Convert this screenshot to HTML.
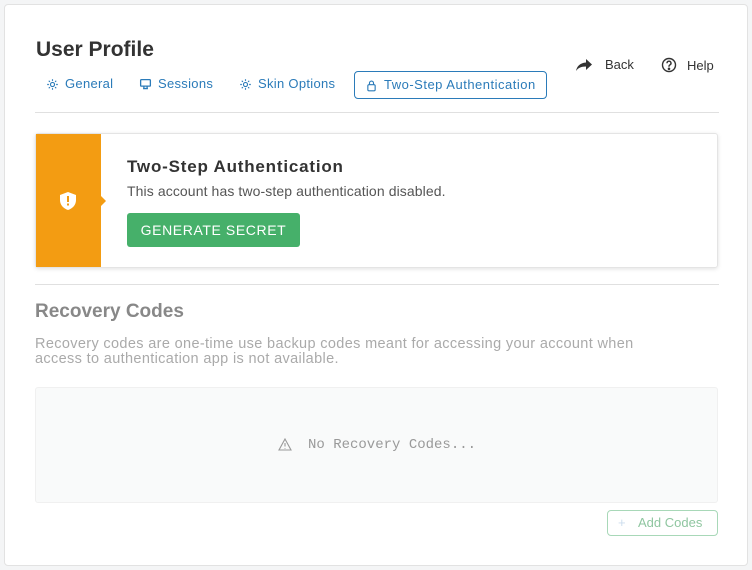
<!DOCTYPE html>
<html><head><meta charset="utf-8"><style>
body{margin:0;width:752px;height:570px;background:#f4f5f6;font-family:"Liberation Sans",sans-serif;position:relative;overflow:hidden}
.card{position:absolute;left:4px;top:4px;width:742px;height:560px;background:#fff;border:1px solid #e2e2e2;border-radius:4px}
.abs{position:absolute}
h1{position:absolute;left:31px;top:33px;margin:0;font-size:21px;font-weight:bold;color:#333}
.tab{position:absolute;top:66px;height:26px;line-height:26px;font-size:13px;color:#2b7bb9;display:flex;align-items:center;gap:6px;letter-spacing:.3px}
.tab svg{width:13px;height:13px}
.active{border:1px solid #2b7bb9;border-radius:4px;padding:0 10px;letter-spacing:.5px}
.hr{position:absolute;left:30px;width:684px;height:1px;background:#e0e0e0}
.nav{position:absolute;top:52px;font-size:13px;color:#333;display:flex;align-items:center;gap:8px}
</style></head><body>
<div class="card">
<h1>User Profile</h1>
<div class="tab" style="left:41px"><svg viewBox="0 0 16 16" fill="none" stroke="#2b7bb9" stroke-width="1.4"><circle cx="8" cy="8" r="2.5"/><path d="M8 1.5v2M8 12.5v2M1.5 8h2M12.5 8h2M3.4 3.4l1.4 1.4M11.2 11.2l1.4 1.4M3.4 12.6l1.4-1.4M11.2 4.8l1.4-1.4"/></svg>General</div>
<div class="tab" style="left:134px"><svg viewBox="0 0 16 16" fill="none" stroke="#2b7bb9" stroke-width="1.6"><rect x="2" y="2" width="12" height="8" rx="1"/><path d="M5 13h6M6 10v3M10 10v3"/></svg>Sessions</div>
<div class="tab" style="left:234px"><svg viewBox="0 0 16 16" fill="none" stroke="#2b7bb9" stroke-width="1.4"><circle cx="8" cy="8" r="2.5"/><path d="M8 1.5v2M8 12.5v2M1.5 8h2M12.5 8h2M3.4 3.4l1.4 1.4M11.2 11.2l1.4 1.4M3.4 12.6l1.4-1.4M11.2 4.8l1.4-1.4"/></svg>Skin Options</div>
<div class="tab active" style="left:349px;top:66px"><svg viewBox="0 0 16 16" fill="none" stroke="#2b7bb9" stroke-width="1.4"><rect x="3.5" y="7" width="9" height="7.5" rx="1.5"/><path d="M5.5 7V5a2.5 2.5 0 0 1 5 0v2"/></svg>Two-Step Authentication</div>
<div class="nav" style="left:570px"><svg width="18" height="14" viewBox="0 0 18 14"><path d="M11 1l6 5.5-6 5.5V8.5C6 8.5 3 10 1 13c1-5 4-8 10-8.5z" fill="#333"/></svg><span style="margin-left:4px">Back</span></div>
<div class="nav" style="left:656px"><svg width="16" height="16" viewBox="0 0 16 16" fill="none" stroke="#333" stroke-width="1.4"><circle cx="8" cy="8" r="6.5"/><path d="M6 6.2a2 2 0 1 1 2.8 1.8c-.6.3-.8.7-.8 1.3v.5"/><circle cx="8" cy="11.8" r=".6" fill="#333"/></svg><span style="margin-left:2px">Help</span></div>
<div class="hr" style="top:107px"></div>
<div class="abs" style="left:30px;top:128px;width:681px;height:133px;border:1px solid #e4e4e4;border-radius:3px;box-shadow:0 1px 4px rgba(0,0,0,.12);overflow:visible">
 <div class="abs" style="left:0;top:0;width:65px;height:133px;background:#f39c12"></div>
 <div class="abs" style="left:65px;top:62px;width:0;height:0;border-top:5px solid transparent;border-bottom:5px solid transparent;border-left:5px solid #f39c12"></div>
 <svg class="abs" style="left:22px;top:57px" width="20" height="20" viewBox="0 0 20 20"><path d="M10 1l8 3v5c0 5-3.5 8.5-8 10C5.5 17.5 2 14 2 9V4z" fill="#fff"/><rect x="9" y="5" width="2" height="6" fill="#f39c12"/><rect x="9" y="12.5" width="2" height="2" fill="#f39c12"/></svg>
 <div class="abs" style="left:91px;top:23px;font-size:17px;font-weight:bold;color:#333;letter-spacing:.8px">Two-Step Authentication</div>
 <div class="abs" style="left:91px;top:49px;font-size:14px;color:#555;letter-spacing:.1px">This account has two-step authentication disabled.</div>
 <div class="abs" style="left:91px;top:79px;width:173px;height:34px;background:#46b06a;border-radius:3px;color:#fff;font-size:14px;line-height:34px;text-align:center;letter-spacing:.6px">GENERATE SECRET</div>
</div>
<div class="hr" style="top:279px"></div>
<div class="abs" style="left:30px;top:296px;font-size:19px;color:#888;font-weight:bold">Recovery Codes</div>
<div class="abs" style="left:30px;top:332px;font-size:14.5px;color:#aaa;line-height:15px;width:648px;letter-spacing:.35px">Recovery codes are one-time use backup codes meant for accessing your account when access to authentication app is not available.</div>
<div class="abs" style="left:30px;top:382px;width:681px;height:114px;background:#f9fafa;border:1px solid #f0f0f0;border-radius:3px"></div>
<svg class="abs" style="left:273px;top:433px" width="14" height="13" viewBox="0 0 14 13" fill="none" stroke="#999" stroke-width="1.1"><path d="M7 1L13 12H1z"/><path d="M7 5v3.5M7 10v.6"/></svg>
<div class="abs" style="left:303px;top:432px;font-family:'Liberation Mono',monospace;font-size:14px;color:#999">No Recovery Codes...</div>
<div class="abs" style="left:602px;top:505px;width:109px;height:24px;border:1px solid #a8d8b8;border-radius:4px;font-size:13px;color:#8fc6a0;line-height:24px"><span style="position:absolute;left:10px;color:#cde">+</span><span style="position:absolute;left:30px">Add Codes</span></div>
</div>
</body></html>
